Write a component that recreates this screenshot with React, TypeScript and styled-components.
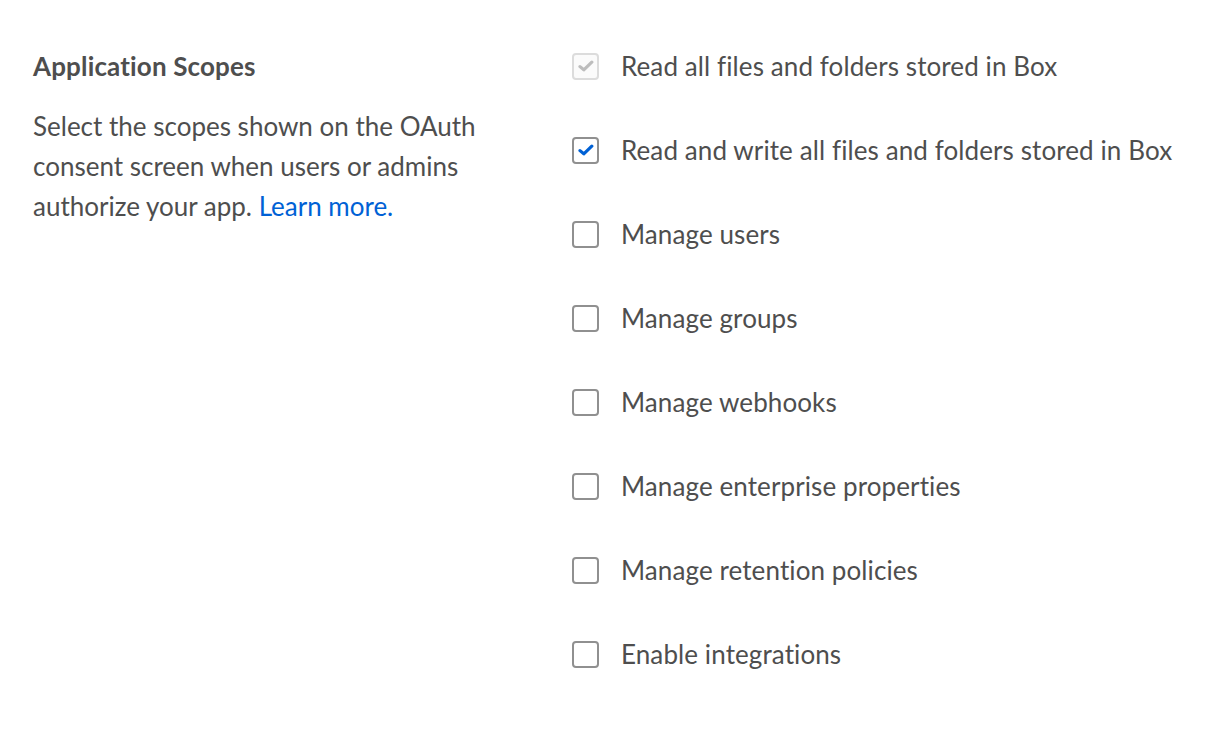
import React from 'react';
import styled, { createGlobalStyle } from 'styled-components';

const GlobalStyle = createGlobalStyle`
  body {
    margin: 0;
    background: #fff;
    font-family: Lato, "Open Sans", sans-serif;
    font-variant-ligatures: none;
    color: #4e4e4e;
  }
`;

const scopes = [
  { label: 'Read all files and folders stored in Box', checked: true, disabled: true },
  { label: 'Read and write all files and folders stored in Box', checked: true },
  { label: 'Manage users' },
  { label: 'Manage groups' },
  { label: 'Manage webhooks' },
  { label: 'Manage enterprise properties' },
  { label: 'Manage retention policies' },
  { label: 'Enable integrations' },
];

function CheckMark({ color }: { color: string }) {
  return (
    <svg width="16" height="12" viewBox="0 0 16 12">
      <path d="M2 6.6 L5.8 9.8 L13.8 2.2" fill="none" stroke={color} strokeWidth="3.2" strokeLinecap="round" strokeLinejoin="round" />
    </svg>
  );
}

function App() {
  return (
    <>
      <GlobalStyle />
      <Section>
        <Intro>
          <Heading>Application Scopes</Heading>
          <Description>
            Select the scopes shown on the OAuth consent screen when users or admins authorize your app.{' '}
            <Link href="#">Learn more.</Link>
          </Description>
        </Intro>
        <ScopeList>
          {scopes.map((s) => (
            <Scope key={s.label}>
              <Box $disabled={s.disabled}>
                {s.checked && <CheckMark color={s.disabled ? '#bdbdbd' : '#0061d5'} />}
              </Box>
              <Label>{s.label}</Label>
            </Scope>
          ))}
        </ScopeList>
      </Section>
    </>
  );
}

const Section = styled.div`
  display: grid;
  grid-template-columns: 539px 1fr;
  padding: 0 33px;
`;

const Intro = styled.div`
  padding-top: 52px;
`;

const Heading = styled.h2`
  margin: 0;
  font-size: 26px;
  line-height: 28px;
  font-weight: 700;
  letter-spacing: 0.15px;
  color: #4e4e4e;
`;

const Description = styled.p`
  margin: 26px 0 0;
  width: 470px;
  font-size: 26px;
  line-height: 40px;
`;

const Link = styled.a`
  color: #0061d5;
  text-decoration: none;
`;

const ScopeList = styled.div`
  display: flex;
  flex-direction: column;
  gap: 44px;
  padding-top: 46px;
`;

const Scope = styled.label`
  display: flex;
  align-items: center;
  gap: 22px;
  height: 40px;
`;

const Box = styled.span<{ $disabled?: boolean }>`
  box-sizing: border-box;
  width: 27px;
  height: 27px;
  display: flex;
  align-items: center;
  justify-content: center;
  border: 2px solid ${(p) => (p.$disabled ? '#dcdcdc' : '#909090')};
  border-radius: 4px;
  background: ${(p) => (p.$disabled ? '#fbfbfb' : '#fff')};
`;

const Label = styled.span`
  font-size: 26px;
  line-height: 40px;
  letter-spacing: 0.1px;
`;

export default App;
